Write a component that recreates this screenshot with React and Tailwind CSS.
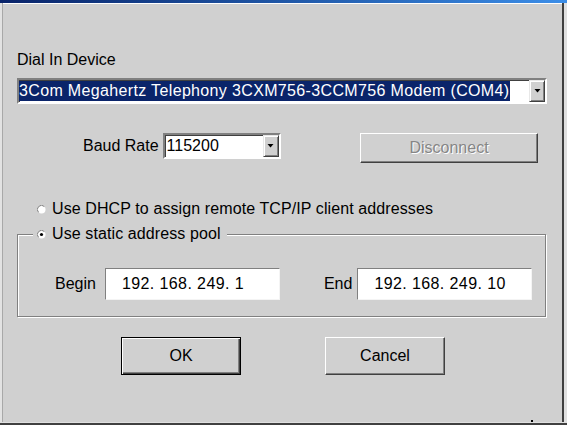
import React from 'react'

function Arrow() {
    return (
        <svg width="7" height="4" viewBox="0 0 7 4">
            <path d="M0.5 0H6.5L3.5 3.5Z" fill="#000" />
        </svg>
    )
}

function DropButton() {
    return (
        <div className="w-[16px] self-stretch flex items-center justify-center bg-[#d0d0d0] border border-t-[#e8e8e8] border-l-[#e8e8e8] border-r-[#404040] border-b-[#404040] shadow-[inset_1px_1px_0_#fff,inset_-1px_-1px_0_#808080]">
            <Arrow />
        </div>
    )
}

function Radio({ checked }) {
    return (
        <svg width="9" height="9" viewBox="0 0 9 9" className="shrink-0">
            <circle cx="4.5" cy="4.5" r="4" fill="#fff" />
            <path d="M1.6 7.4A4 4 0 0 1 7.4 1.6" fill="none" stroke="#808080" strokeWidth="1" />
            {checked && <circle cx="4.5" cy="4.5" r="1.6" fill="#000" />}
        </svg>
    )
}

function Field({ children }) {
    return (
        <div className="w-[175px] h-[32px] flex items-center pl-[16px] tracking-[0.4px] bg-white border border-t-[#808080] border-l-[#808080] border-r-[#f4f4f4] border-b-[#f4f4f4]">
            {children}
        </div>
    )
}

export default function App() {
    return (
        <div className="w-[567px] h-[425px] flex flex-col bg-[#d0d0d0] text-[16px] text-black font-['Liberation_Sans',Arial,sans-serif] overflow-hidden">
            {/* title bar remnant */}
            <div className="h-[3px] bg-gradient-to-r from-[#0a246a] to-[#3c8ee8]" />

            <div className="flex-1 flex min-h-0">
                <div className="w-[3px] bg-[#e2e2e2] border-r border-[#a8a8a8]" />

                <div className="flex-1 flex flex-col border-t border-white pt-[47px] pl-[14px] pr-[15px]">
                    <div className="leading-[18px]">Dial In Device</div>

                    {/* device combo */}
                    <div className="mt-[9px] h-[26px] flex bg-white border-2 border-t-[#808080] border-l-[#808080] border-r-white border-b-white shadow-[inset_1px_1px_0_#404040]">
                        <div className="flex-1 flex items-stretch py-[1px]">
                            <span className="bg-[#0a246a] text-white pr-[1px] leading-[20px] tracking-[0.35px] whitespace-nowrap">
                                3Com Megahertz Telephony 3CXM756-3CCM756 Modem (COM4)
                            </span>
                        </div>
                        <DropButton />
                    </div>

                    {/* baud rate row */}
                    <div className="mt-[29px] flex items-start">
                        <span className="ml-[66px] leading-[26px]">Baud Rate</span>
                        <div className="ml-[4px] w-[118px] h-[26px] flex bg-white border-2 border-t-[#808080] border-l-[#808080] border-r-white border-b-white shadow-[inset_1px_1px_0_#404040]">
                            <span className="flex-1 pl-[2px] leading-[22px]">115200</span>
                            <DropButton />
                        </div>
                        <button className="ml-auto mr-[9px] w-[178px] h-[30px] bg-[#d0d0d0] border border-t-white border-l-white border-r-[#404040] border-b-[#404040] shadow-[inset_-1px_-1px_0_#808080] text-[#868686] [text-shadow:1px_1px_0_#fff]">
                            Disconnect
                        </button>
                    </div>

                    {/* dhcp */}
                    <div className="mt-[37px] ml-[20px] flex items-center gap-[6px] leading-[18px] tracking-[0.1px]">
                        <Radio />
                        <span>Use DHCP to assign remote TCP/IP client addresses</span>
                    </div>

                    {/* static pool group */}
                    <fieldset className="mt-[7px] mr-[1px] border border-[#808080] shadow-[inset_1px_1px_0_#fff,1px_1px_0_#fff] pb-[16px]">
                        <legend className="ml-[15px] pl-[4px] pr-[6px] bg-[#d0d0d0] leading-[18px] tracking-[0.1px]">
                            <span className="flex items-center gap-[6px]">
                                <Radio checked />
                                <span>Use static address pool</span>
                            </span>
                        </legend>
                        <div className="mt-[25px] flex items-center">
                            <span className="ml-[37px] mr-[9px]">Begin</span>
                            <Field>192. 168. 249. 1</Field>
                            <span className="ml-[44px] mr-[5px]">End</span>
                            <Field>192. 168. 249. 10</Field>
                        </div>
                    </fieldset>

                    {/* buttons */}
                    <div className="mt-[20px] flex">
                        <button className="ml-[104px] w-[120px] h-[38px] bg-[#d0d0d0] border border-black shadow-[inset_1px_1px_0_#fff,inset_-1px_-1px_0_#404040,inset_-2px_-2px_0_#808080]">
                            OK
                        </button>
                        <button className="ml-[84px] w-[120px] h-[38px] bg-[#d0d0d0] border border-t-white border-l-white border-r-[#404040] border-b-[#404040] shadow-[inset_-1px_-1px_0_#808080]">
                            Cancel
                        </button>
                    </div>

                    <div className="mt-auto flex justify-end pr-[14px]">
                        <div className="w-[2px] h-[2px] bg-black" />
                    </div>
                </div>

                <div className="w-[2px] bg-[#404040]" />
                <div className="w-[3px] bg-[#e0e0e0]" />
            </div>

            <div className="h-[1px] bg-[#e0e0e0]" />
            <div className="h-[2px] bg-[#404040]" />
        </div>
    )
}
